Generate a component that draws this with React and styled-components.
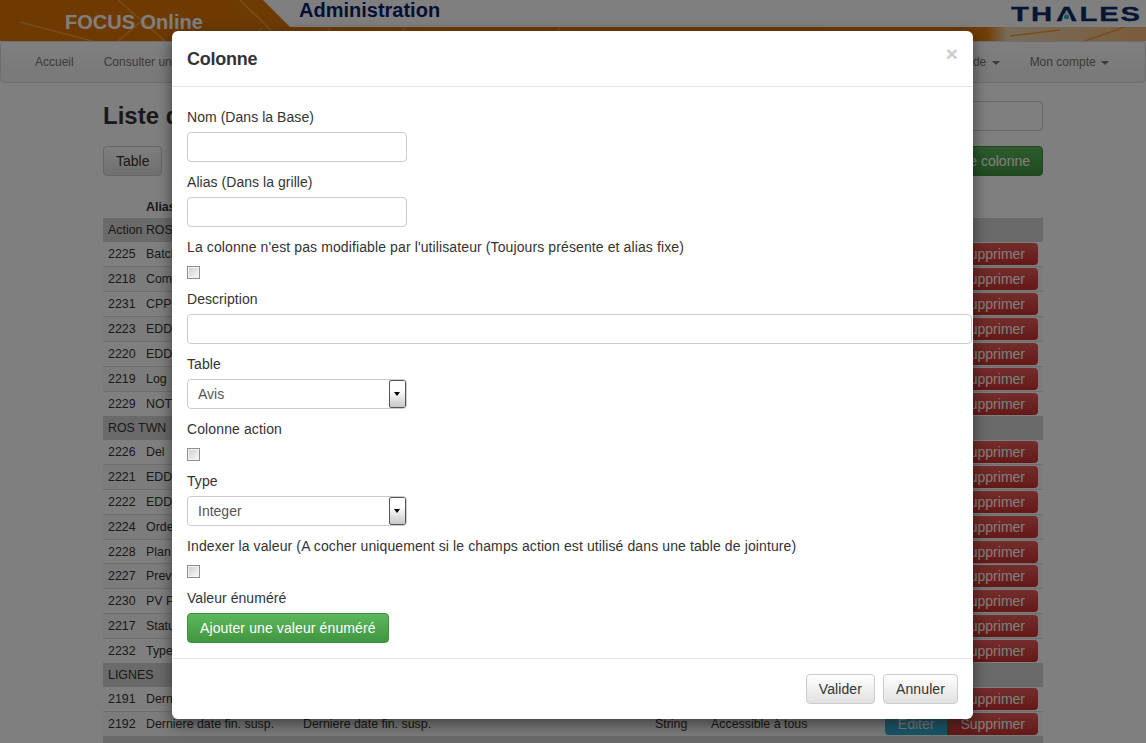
import React from "react";
import styled, { createGlobalStyle } from "styled-components";

const GlobalStyle = createGlobalStyle`
  html, body {
    margin: 0;
    padding: 0;
    height: 100%;
    overflow: hidden;
  }
  body {
    background: #fff;
    font-family: "Liberation Sans", Arial, sans-serif;
    font-size: 14px;
    line-height: 20px;
    color: #333;
  }
  * { box-sizing: border-box; }
`;

const groups = [
  {
    name: "Action ROS",
    rows: [
      [2225, "Batch"],
      [2218, "Comm"],
      [2231, "CPP"],
      [2223, "EDD"],
      [2220, "EDD"],
      [2219, "Log"],
      [2229, "NOT"],
    ],
  },
  {
    name: "ROS TWN",
    rows: [
      [2226, "Del"],
      [2221, "EDD"],
      [2222, "EDD"],
      [2224, "Orde"],
      [2228, "Plan"],
      [2227, "Prev"],
      [2230, "PV P"],
      [2217, "Statu"],
      [2232, "Type"],
    ],
  },
  {
    name: "LIGNES",
    rows: [
      [2191, "Derniere date"],
      [2192, "Derniere date fin. susp.", "Derniere date fin. susp.", "String", "Accessible à tous"],
    ],
  },
];

const App = () => {
  return (
    <Page>
      <GlobalStyle />
      <Banner>
        <BannerLines viewBox="0 0 1146 41">
          <path
            d="M118 0 L165 41 M20 22 L92 41 M150 14 L118 41 M240 0 L282 41 M262 28 L246 41 M330 27 L322 41 M405 27 L396 41 M560 27 L552 41 M1085 41 L1125 27 M1010 36 L1060 30"
            stroke="#f09a3c"
            strokeWidth="1.5"
            fill="none"
          />
        </BannerLines>
        <Brand>FOCUS Online</Brand>
        <TopPanel>
          <BannerTitle>Administration</BannerTitle>
          <ThalesLogo viewBox="0 0 129 20">
            <text
              transform="scale(1.5 1)"
              x="0 13.3 30 45.6 58.9 73"
              y="15.7"
              fontSize="19.5"
              fontWeight="700"
              fontFamily="Liberation Sans, Arial, sans-serif"
              fill="#0b2a66"
              stroke="#0b2a66"
              strokeWidth="0.3"
            >
              THALES
            </text>
            <polygon points="52.9,9 58.1,9 59.8,13 51.2,13" fill="#fff" />
            <circle cx="55.5" cy="11.7" r="2.5" fill="#2fb0b4" />
          </ThalesLogo>
        </TopPanel>
      </Banner>
      <Navbar>
        <NavItem>Accueil</NavItem>
        <NavItem>Consulter un</NavItem>
        <NavSpacer />
        <NavItem>
          Aide <Caret />
        </NavItem>
        <NavItem>
          Mon compte <Caret />
        </NavItem>
      </Navbar>
      <Content>
        <TitleRow>
          <PageTitle>Liste des colonnes</PageTitle>
          <SearchInput />
        </TitleRow>
        <ActionRow>
          <GhostButton>Table</GhostButton>
          <GreenDimButton>Ajouter une colonne</GreenDimButton>
        </ActionRow>
        <TableHead>
          <IdCell />
          <HeadName>Alias</HeadName>
        </TableHead>
        {groups.map((group) => (
          <React.Fragment key={group.name}>
            <GroupRow>{group.name}</GroupRow>
            {group.rows.map(([id, alias, db, type, access], index) => (
              <Row
                key={id}
                $striped={index % 2 === 1}
                $last={index === group.rows.length - 1}
                $tight={id === 2228}
              >
                <IdCell>{id}</IdCell>
                <NameCell>{alias}</NameCell>
                <NameCell>{db}</NameCell>
                <TypeCell>{type}</TypeCell>
                <AccessCell>{access}</AccessCell>
                <RowButtons>
                  <EditButton>Editer</EditButton>
                  <DeleteButton>Supprimer</DeleteButton>
                </RowButtons>
              </Row>
            ))}
          </React.Fragment>
        ))}
        <GroupRow />
      </Content>

      <Backdrop />
      <Modal>
        <ModalHeader>
          <ModalTitle>Colonne</ModalTitle>
          <Close>×</Close>
        </ModalHeader>
        <ModalBody>
          <Label>Nom (Dans la Base)</Label>
          <ShortInput />
          <Label>Alias (Dans la grille)</Label>
          <ShortInput />
          <Label $wide>La colonne n'est pas modifiable par l'utilisateur (Toujours présente et alias fixe)</Label>
          <CheckBox />
          <Label>Description</Label>
          <LongInput />
          <Label>Table</Label>
          <SelectBox>
            <SelectValue>Avis</SelectValue>
            <SelectArrow />
          </SelectBox>
          <Label $wide>Colonne action</Label>
          <CheckBox />
          <Label>Type</Label>
          <SelectBox>
            <SelectValue>Integer</SelectValue>
            <SelectArrow />
          </SelectBox>
          <Label $wide>Indexer la valeur (A cocher uniquement si le champs action est utilisé dans une table de jointure)</Label>
          <CheckBox />
          <Label>Valeur énuméré</Label>
          <AddButton>Ajouter une valeur énuméré</AddButton>
        </ModalBody>
        <ModalFooter>
          <DefaultButton>Valider</DefaultButton>
          <DefaultButton>Annuler</DefaultButton>
        </ModalFooter>
      </Modal>
    </Page>
  );
};

const Page = styled.div`
  position: relative;
  width: 1146px;
  height: 743px;
  overflow: hidden;
`;

const Banner = styled.header`
  position: relative;
  height: 41px;
  padding: 10px 0 0 65px;
  overflow: hidden;
  background: linear-gradient(90deg, #dc7404 0, #e07a0a 86%, #f0d8b8 88%, #f6b878 100%);
`;

const BannerLines = styled.svg`
  position: absolute;
  left: 0;
  top: 0;
  width: 1146px;
  height: 41px;
`;

const Brand = styled.div`
  position: relative;
  font-size: 20px;
  line-height: 24px;
  font-weight: 700;
  color: #fff;
`;

const TopPanel = styled.div`
  position: absolute;
  left: 263px;
  top: 0;
  right: 0;
  height: 27px;
  display: flex;
  justify-content: space-between;
  padding: 0 6px 0 36px;
  background: #fff;
  clip-path: polygon(0 0, 100% 0, 100% 100%, 27px 100%);
`;

const BannerTitle = styled.div`
  font-size: 20px;
  line-height: 20px;
  font-weight: 700;
  color: #0b1f6b;
`;

const ThalesLogo = styled.svg`
  width: 129px;
  height: 20px;
  margin-top: 5px;
`;

const Navbar = styled.nav`
  display: flex;
  align-items: center;
  height: 42px;
  padding: 0 21px 0 19px;
  background: linear-gradient(#fff, #f1f1f1);
  border: 1px solid #ddd;
  border-radius: 4px;
`;

const NavItem = styled.div`
  padding: 0 15px;
  font-size: 12px;
  color: #777;
`;

const NavSpacer = styled.div`
  flex: 1;
`;

const Caret = styled.span`
  display: inline-block;
  margin-left: 2px;
  vertical-align: middle;
  border-top: 4px solid #777;
  border-left: 4px solid transparent;
  border-right: 4px solid transparent;
`;

const Content = styled.main`
  width: 940px;
  margin: 0 auto;
  padding-top: 18px;
`;

const TitleRow = styled.div`
  display: flex;
  justify-content: space-between;
  align-items: center;
  height: 30px;
`;

const PageTitle = styled.h1`
  margin: 0;
  font-size: 24px;
  line-height: 30px;
  font-weight: 700;
  color: #333;
`;

const SearchInput = styled.div`
  width: 220px;
  height: 30px;
  border: 1px solid #ccc;
  border-radius: 4px;
  background: #fff;
`;

const ActionRow = styled.div`
  display: flex;
  justify-content: space-between;
  margin-top: 15px;
  height: 30px;
`;

const GhostButton = styled.div`
  display: flex;
  align-items: center;
  height: 30px;
  padding: 0 12px;
  border: 1px solid #ccc;
  border-radius: 4px;
  background: linear-gradient(#fff, #e0e0e0);
  color: #333;
`;

const GreenDimButton = styled.div`
  display: flex;
  align-items: center;
  height: 30px;
  padding: 0 12px;
  border: 1px solid #3e8f3e;
  border-radius: 4px;
  background: linear-gradient(#5cb85c, #419641);
  color: #fff;
`;

const TableHead = styled.div`
  display: flex;
  align-items: center;
  height: 42px;
  padding-top: 20px;
  font-size: 12.4px;
`;

const HeadName = styled.div`
  font-weight: 700;
`;

const GroupRow = styled.div`
  height: 24px;
  padding-left: 5px;
  background: #d4d4d4;
  font-size: 12.4px;
  line-height: 24px;
  color: #333;
`;

const Row = styled.div`
  display: flex;
  align-items: center;
  height: ${(props) => (props.$last || props.$tight ? "24px" : "25px")};
  border-bottom: ${(props) => (props.$last ? "none" : "1px solid #ddd")};
  background: ${(props) => (props.$striped ? "#f8f8f8" : "#fff")};
  font-size: 12.4px;
`;

const IdCell = styled.div`
  width: 43px;
  padding-left: 5px;
  flex: none;
`;

const NameCell = styled.div`
  width: 157px;
  flex: none;
  white-space: nowrap;
  overflow: hidden;
`;

const TypeCell = styled.div`
  margin-left: 195px;
  width: 56px;
  flex: none;
`;

const AccessCell = styled.div`
  flex: 1;
`;

const RowButtons = styled.div`
  display: flex;
  margin-right: 5px;
  font-size: 14px;
`;

const EditButton = styled.div`
  display: flex;
  align-items: center;
  height: 22px;
  padding: 0 13px;
  border-radius: 4px 0 0 4px;
  background: linear-gradient(#5bc0de, #2aabd2);
  color: #fff;
`;

const DeleteButton = styled.div`
  display: flex;
  align-items: center;
  height: 22px;
  padding: 0 13px;
  border-radius: 0 4px 4px 0;
  background: linear-gradient(#e65c58, #c9322e);
  color: #fff;
`;

const Backdrop = styled.div`
  position: absolute;
  inset: 0;
  background: rgba(0, 0, 0, 0.5);
`;

const Modal = styled.div`
  position: absolute;
  left: 172px;
  top: 31px;
  width: 801px;
  height: 688px;
  border-radius: 6px;
  background: #fff;
  box-shadow: 0 5px 15px rgba(0, 0, 0, 0.5);
`;

const ModalHeader = styled.div`
  position: relative;
  height: 56px;
  padding: 15px;
  border-bottom: 1px solid #e5e5e5;
`;

const ModalTitle = styled.h4`
  margin: 0;
  padding-top: 3px;
  font-size: 18px;
  line-height: 20px;
  font-weight: 700;
  letter-spacing: -0.25px;
  color: #333;
`;

const Close = styled.span`
  position: absolute;
  right: 15px;
  top: 12px;
  font-size: 21px;
  line-height: 21px;
  font-weight: 700;
  color: #ccc;
`;

const ModalBody = styled.div`
  display: flex;
  flex-direction: column;
  align-items: flex-start;
  height: 571px;
  padding: 20px 0 0 15px;
`;

const Label = styled.label`
  display: block;
  height: 20px;
  margin-bottom: 5px;
  font-size: 14px;
  line-height: 20px;
  letter-spacing: ${(props) => (props.$wide ? "0.11px" : "0.05px")};
  color: #333;
`;

const ShortInput = styled.div`
  width: 220px;
  height: 30px;
  margin-bottom: 10px;
  border: 1px solid #ccc;
  border-radius: 4px;
  background: #fff;
`;

const LongInput = styled(ShortInput)`
  width: 785px;
`;

const CheckBox = styled.div`
  width: 13px;
  height: 13px;
  margin: 4px 0 10px;
  border: 1px solid #8e8e8e;
  background: linear-gradient(135deg, #cfcfcf, #f8f8f8);
  box-shadow: inset 0 0 0 1px #f2f2f2;
`;

const SelectBox = styled.div`
  display: flex;
  align-items: stretch;
  width: 220px;
  height: 30px;
  margin-bottom: 10px;
  border: 1px solid #ccc;
  border-radius: 4px;
  overflow: hidden;
`;

const SelectValue = styled.div`
  flex: 1;
  padding-left: 10px;
  line-height: 28px;
  color: #555;
`;

const SelectArrow = styled.div`
  position: relative;
  width: 17px;
  border: 1px solid #555;
  border-radius: 2px;
  background: linear-gradient(#fff 35%, #c8c8c8);
  &::after {
    content: "";
    position: absolute;
    left: 4px;
    top: 11px;
    border-top: 4px solid #000;
    border-left: 3.5px solid transparent;
    border-right: 3.5px solid transparent;
  }
`;

const AddButton = styled.div`
  height: 30px;
  padding: 0 12px;
  border: 1px solid #3e8f3e;
  border-radius: 4px;
  background: linear-gradient(#5cb85c, #419641);
  line-height: 28px;
  letter-spacing: 0.11px;
  color: #fff;
`;

const ModalFooter = styled.div`
  display: flex;
  justify-content: flex-end;
  gap: 8px;
  height: 61px;
  padding: 15px;
  border-top: 1px solid #e5e5e5;
`;

const DefaultButton = styled.div`
  height: 30px;
  padding: 0 12px;
  border: 1px solid #ccc;
  border-radius: 4px;
  background: linear-gradient(#fff, #e0e0e0);
  line-height: 28px;
  letter-spacing: 0.1px;
  color: #333;
`;

export default App;
